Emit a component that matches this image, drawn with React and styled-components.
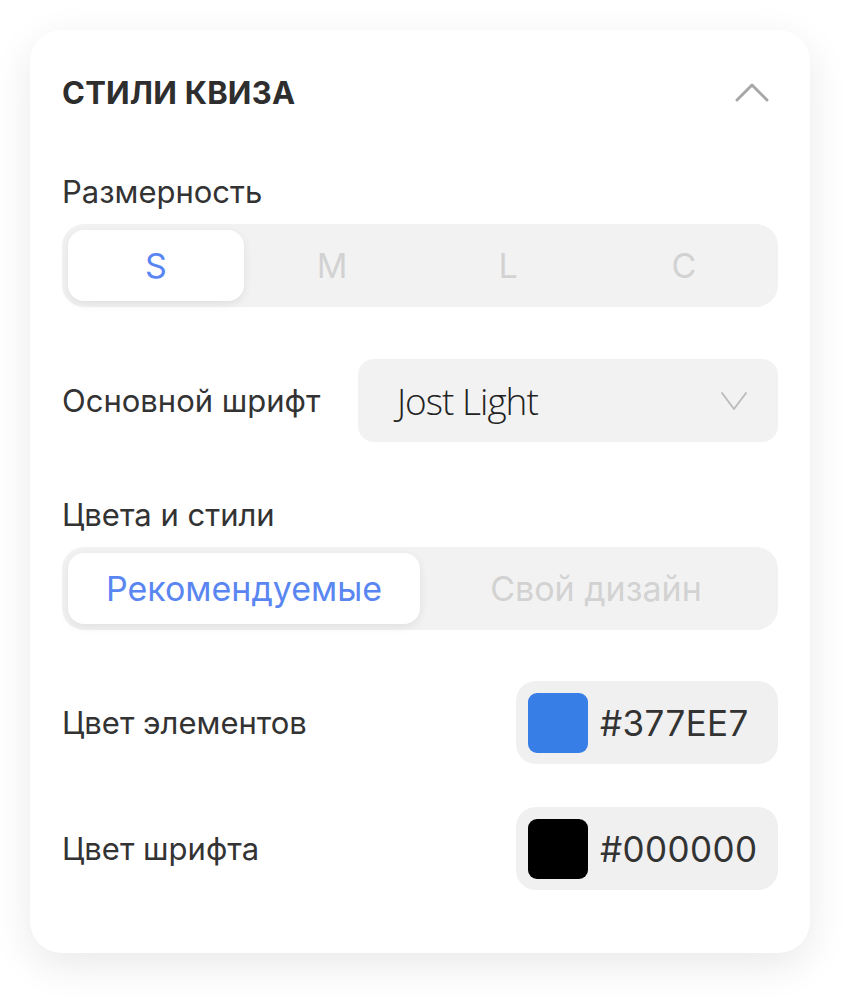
import React, { useState } from "react";
import styled, { createGlobalStyle } from "styled-components";

const GlobalStyle = createGlobalStyle`
  html, body {
    margin: 0;
    padding: 0;
    background: #fff;
  }
  body {
    font-family: Inter, "Noto Sans", sans-serif;
    color: #333;
  }
`;

const Page = styled.div`
  padding: 30px 49px 50px 30px;
`;

const Card = styled.div`
  width: 780px;
  box-sizing: border-box;
  background: #fff;
  border-radius: 32px;
  box-shadow: 0 12px 40px rgba(0, 0, 0, 0.09);
  padding: 42px 32px 63px 32px;
  display: flex;
  flex-direction: column;
`;

const Header = styled.div`
  display: flex;
  align-items: center;
  justify-content: space-between;
  height: 40px;
  margin-bottom: 62px;

  h2 {
    margin: 0;
    font-size: 31px;
    font-weight: 700;
    color: #2e2e2e;
    letter-spacing: 0.2px;
  }

  svg {
    margin-right: 9px;
  }
`;

const Label = styled.div`
  font-size: 31px;
  color: #333;
  line-height: 36px;
`;

const Section = styled.div`
  display: flex;
  flex-direction: column;
  gap: 14px;
  margin-bottom: ${(p) => p.$mb || 0}px;
`;

const Segmented = styled.div`
  display: flex;
  background: #f2f2f2;
  border-radius: 22px;
  padding: 6px;
  height: 83px;
  box-sizing: border-box;
`;

const Segment = styled.button`
  flex: 1;
  border: 0;
  border-radius: 16px;
  font-family: Inter, "Noto Sans", sans-serif;
  font-size: 34px;
  background: ${(p) => (p.$active ? "#fff" : "transparent")};
  color: ${(p) => (p.$active ? "#5a86f2" : "#d2d2d2")};
  box-shadow: ${(p) => (p.$active ? "0 3px 10px rgba(0,0,0,0.08)" : "none")};
  cursor: pointer;
  padding: 0;
`;

const Row = styled.div`
  display: flex;
  align-items: center;
  justify-content: space-between;
  margin-bottom: ${(p) => p.$mb || 0}px;
`;

const Select = styled.div`
  width: 420px;
  height: 83px;
  box-sizing: border-box;
  background: #f2f2f2;
  border-radius: 16px;
  display: flex;
  align-items: center;
  justify-content: space-between;
  padding: 0 30px 0 39px;

  span {
    font-family: "Open Sans", Lato, sans-serif;
    font-weight: 300;
    font-size: 37px;
    color: #222;
    letter-spacing: -1px;
  }
`;

const ColorField = styled.div`
  width: 262px;
  height: 83px;
  box-sizing: border-box;
  background: #f0f0f0;
  border-radius: 20px;
  display: flex;
  align-items: center;
  gap: 12px;
  padding: 0 12px;

  span {
    font-size: 35px;
    color: #333;
    letter-spacing: 0.4px;
  }
`;

const Swatch = styled.div`
  width: 60px;
  height: 60px;
  border-radius: 9px;
  background: ${(p) => p.$color};
  flex-shrink: 0;
`;

const ChevronUp = () => (
  <svg width="34" height="20" viewBox="0 0 34 20" fill="none">
    <path d="M2 18 L17 3 L32 18" stroke="#a8a8a8" strokeWidth="3" strokeLinecap="round" strokeLinejoin="round" />
  </svg>
);

const ChevronDown = () => (
  <svg width="28" height="20" viewBox="0 0 28 20" fill="none">
    <path d="M2 2 L14 18 L26 2" stroke="#bdbdbd" strokeWidth="2" strokeLinecap="round" strokeLinejoin="round" />
  </svg>
);

export default function App() {
  const [size, setSize] = useState("S");
  const [mode, setMode] = useState("rec");

  return (
    <>
      <GlobalStyle />
      <Page>
        <Card>
          <Header>
            <h2>СТИЛИ КВИЗА</h2>
            <ChevronUp />
          </Header>

          <Section $mb={52}>
            <Label>Размерность</Label>
            <Segmented>
              {["S", "M", "L", "C"].map((s) => (
                <Segment key={s} $active={size === s} onClick={() => setSize(s)}>
                  {s}
                </Segment>
              ))}
            </Segmented>
          </Section>

          <Row $mb={55}>
            <Label>Основной шрифт</Label>
            <Select>
              <span>Jost Light</span>
              <ChevronDown />
            </Select>
          </Row>

          <Section $mb={51}>
            <Label>Цвета и стили</Label>
            <Segmented>
              <Segment $active={mode === "rec"} onClick={() => setMode("rec")}>
                Рекомендуемые
              </Segment>
              <Segment $active={mode === "own"} onClick={() => setMode("own")}>
                Свой дизайн
              </Segment>
            </Segmented>
          </Section>

          <Row $mb={43}>
            <Label>Цвет элементов</Label>
            <ColorField>
              <Swatch $color="#377EE7" />
              <span>#377EE7</span>
            </ColorField>
          </Row>

          <Row>
            <Label>Цвет шрифта</Label>
            <ColorField>
              <Swatch $color="#000000" />
              <span>#000000</span>
            </ColorField>
          </Row>
        </Card>
      </Page>
    </>
  );
}
